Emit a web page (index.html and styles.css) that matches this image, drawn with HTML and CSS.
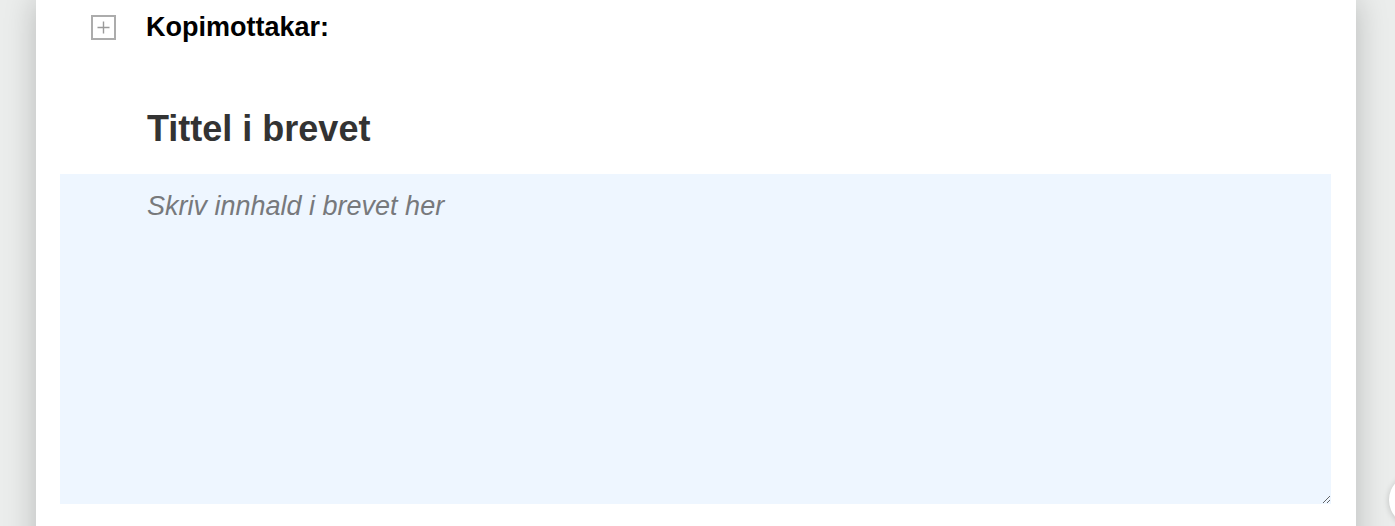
FILE: index.html
```html
<!DOCTYPE html>
<html lang="nn">
<head>
<meta charset="utf-8">
<title>Brev</title>
<link rel="stylesheet" href="styles.css">
</head>
<body>
<div class="page">
  <div class="paper">
    <div class="cc-row">
      <span class="cc-toggle" aria-label="Vis kopimottakarar">
        <svg width="21" height="21" viewBox="0 0 21 21"><path d="M10.5 4.5v12M4.5 10.5h12" stroke="#9a9a9a" stroke-width="1.4"/></svg>
      </span>
      <span class="cc-label">Kopimottakar:</span>
    </div>
    <h1 class="letter-title">Tittel i brevet</h1>
    <textarea class="letter-body" placeholder="Skriv innhald i brevet her"></textarea>
  </div>
  <div class="fab"></div>
</div>
</body>
</html>
```
FILE: styles.css
```css
html, body {
  margin: 0;
  padding: 0;
  height: 100%;
  overflow: hidden;
}
body {
  background: #ebedec;
  font-family: "Liberation Sans", Arial, sans-serif;
}
.page {
  position: relative;
  height: 100%;
}
.paper {
  margin-left: 36px;
  width: 1320px;
  min-height: 600px;
  background: #fff;
  box-shadow: 0 0 30px rgba(0, 0, 0, 0.22);
  padding-top: 14px;
  box-sizing: border-box;
}
.cc-row {
  display: flex;
  align-items: center;
  padding-left: 55px;
  height: 26px;
}
.cc-toggle {
  display: flex;
  flex: none;
  width: 25px;
  height: 25px;
  box-sizing: border-box;
  border: 2px solid #acacac;
  align-items: center;
  justify-content: center;
}
.cc-toggle svg {
  display: block;
  width: 21px;
  height: 21px;
}
.cc-label {
  margin-left: 30px;
  font-size: 27px;
  font-weight: bold;
  color: #000;
}
.letter-title {
  margin: 68px 0 0 111px;
  font-size: 36px;
  font-weight: bold;
  color: #333;
  line-height: 42px;
}
.letter-body {
  display: block;
  margin: 24px 0 0 24px;
  width: 1271px;
  height: 330px;
  box-sizing: border-box;
  border: none;
  outline: none;
  background: #eef6ff;
  padding: 17px 20px 0 87px;
  font-family: "Liberation Sans", Arial, sans-serif;
  font-size: 27px;
  color: #333;
}
.letter-body::placeholder {
  font-style: italic;
  color: #77797c;
}
.fab {
  position: absolute;
  left: 1389px;
  top: 474px;
  width: 52px;
  height: 52px;
  border-radius: 50%;
  background: #fff;
  box-shadow: 0 1px 6px rgba(0, 0, 0, 0.2);
}
```
